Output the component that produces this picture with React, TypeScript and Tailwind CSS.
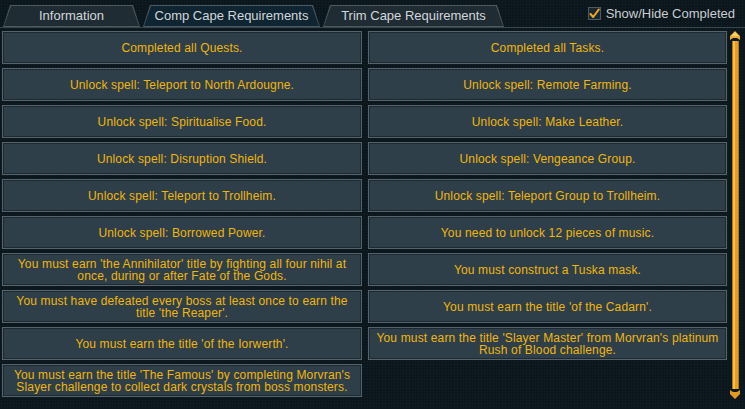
import React from 'react';

const leftItems = [
  'Completed all Quests.',
  'Unlock spell: Teleport to North Ardougne.',
  'Unlock spell: Spiritualise Food.',
  'Unlock spell: Disruption Shield.',
  'Unlock spell: Teleport to Trollheim.',
  'Unlock spell: Borrowed Power.',
  "You must earn 'the Annihilator' title by fighting all four nihil at once, during or after Fate of the Gods.",
  "You must have defeated every boss at least once to earn the title 'the Reaper'.",
  "You must earn the title 'of the Iorwerth'.",
  "You must earn the title 'The Famous' by completing Morvran's Slayer challenge to collect dark crystals from boss monsters.",
];

const rightItems = [
  'Completed all Tasks.',
  'Unlock spell: Remote Farming.',
  'Unlock spell: Make Leather.',
  'Unlock spell: Vengeance Group.',
  'Unlock spell: Teleport Group to Trollheim.',
  'You need to unlock 12 pieces of music.',
  'You must construct a Tuska mask.',
  "You must earn the title 'of the Cadarn'.",
  "You must earn the title 'Slayer Master' from Morvran's platinum Rush of Blood challenge.",
];

const Tab = ({ label, width, active }: { label: string; width: string; active?: boolean }) => (
  <div className={`${width} h-[22px] p-px bg-[#4d5961] [clip-path:polygon(7px_0,calc(100%-7px)_0,100%_100%,0_100%)]`}>
    <div
      className={`h-full w-full flex items-center justify-center text-[13px] text-[#d3d7da] [clip-path:polygon(7px_0,calc(100%-7px)_0,100%_100%,0_100%)] ${
        active ? 'bg-[#0f2532]' : 'bg-[#1f2c33]'
      }`}
    >
      {label}
    </div>
  </div>
);

const Cell = ({ text }: { text: string }) => (
  <div className="h-[33px] border border-[#56636b] bg-[#2e3f4a] shadow-[inset_0_0_0_1px_#1e2a31] flex items-center justify-center px-[3px] text-center text-[12px] leading-[12px] tracking-[0.15px] text-[#f0b60c]">
    {text}
  </div>
);

export default function App() {
  return (
    <div
      className="w-[745px] h-[409px] overflow-hidden bg-[#0c171d] bg-[radial-gradient(#14222a_1px,transparent_1px)] bg-[length:3px_3px]"
      style={{ fontFamily: '"Liberation Sans", Arial, sans-serif' }}
    >
      {/* Header with tabs */}
      <div className="flex items-start h-[28px] border-b border-[#37454d] pl-[3px] pt-[5px]">
        <div className="flex gap-[3px]">
          <Tab label="Information" width="w-[137px]" />
          <Tab label="Comp Cape Requirements" width="w-[177px]" active />
          <Tab label="Trim Cape Requirements" width="w-[181px]" />
        </div>
        <div className="ml-auto mr-[10px] -mt-[1px] flex items-center gap-[5px]">
          <div className="w-[13px] h-[13px] border border-[#4e5a62] bg-[#1b272e] flex items-center justify-center">
            <svg width="11" height="11" viewBox="0 0 11 11">
              <path d="M1.5 6 L4.2 9 L9.8 1.5" fill="none" stroke="#f3a826" strokeWidth="2" strokeLinecap="round" strokeLinejoin="round" />
            </svg>
          </div>
          <span className="text-[13px] text-[#c9cdd0]">Show/Hide Completed</span>
        </div>
      </div>

      {/* Body */}
      <div className="flex pt-[3px] pl-[2px]">
        <div className="grid grid-cols-[360px_359px] gap-x-[6px]">
          <div className="flex flex-col gap-[4px]">
            {leftItems.map((t) => (
              <Cell key={t} text={t} />
            ))}
          </div>
          <div className="flex flex-col gap-[4px]">
            {rightItems.map((t) => (
              <Cell key={t} text={t} />
            ))}
          </div>
        </div>

        {/* Scrollbar */}
        <div className="ml-[3px] w-[10px] h-[368px] flex flex-col items-center">
          <svg width="10" height="10" viewBox="0 0 10 10">
            <path d="M5 0 L10 5 L10 9 L7 7 L3 7 L0 9 L0 5 Z" fill="#f2ad2e" />
            <path d="M5 1 L9 5 L1 5 Z" fill="#fbd26a" />
          </svg>
          <div className="flex-1 w-[7px] bg-[#e59e1e] border-x border-[#b57510] shadow-[inset_2px_0_0_#f6c04a]" />
          <svg width="10" height="10" viewBox="0 0 10 10">
            <path d="M0 1 L3 3 L7 3 L10 1 L10 5 L5 10 L0 5 Z" fill="#e39b1f" />
          </svg>
        </div>
      </div>
    </div>
  );
}
